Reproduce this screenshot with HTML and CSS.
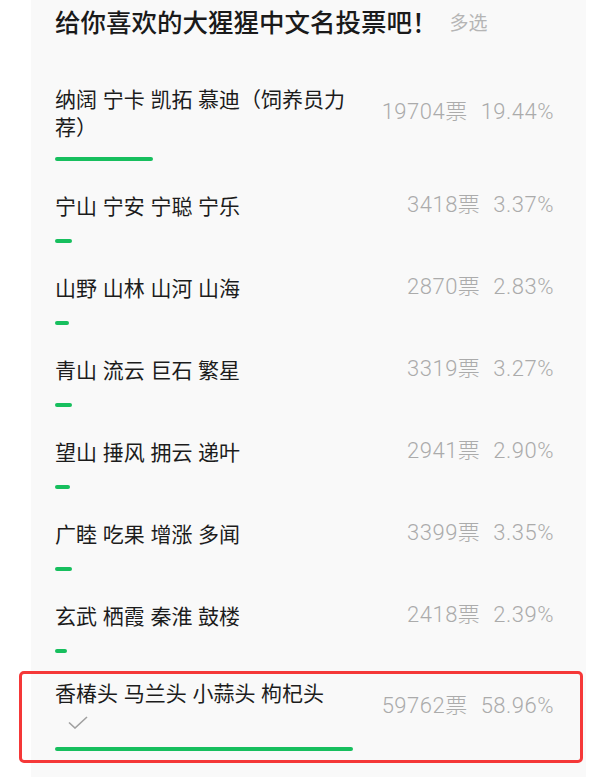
FILE: index.html
```html
<!DOCTYPE html>
<html lang="zh-CN">

<head>
    <meta charset="UTF-8">
    <meta name="viewport" content="width=device-width, initial-scale=1.0">
    <title>投票</title>
    <link rel="stylesheet" href="styles.css">
</head>

<body>
    <div class="card">
        <div class="head">
            <span class="title">给你喜欢的大猩猩中文名投票吧！</span>
            <span class="type">多选</span>
        </div>

        <div class="option tall">
            <div class="row">
                <div class="name wrap">纳阔 宁卡 凯拓 慕迪（饲养员力荐）</div>
                <div class="stats"><span class="count">19704票</span><span class="pct">19.44%</span></div>
            </div>
            <div class="track"><div class="bar" style="width: 19.44%"></div></div>
        </div>

        <div class="option">
            <div class="row">
                <div class="name">宁山 宁安 宁聪 宁乐</div>
                <div class="stats"><span class="count">3418票</span><span class="pct">3.37%</span></div>
            </div>
            <div class="track"><div class="bar" style="width: 3.37%"></div></div>
        </div>

        <div class="option">
            <div class="row">
                <div class="name">山野 山林 山河 山海</div>
                <div class="stats"><span class="count">2870票</span><span class="pct">2.83%</span></div>
            </div>
            <div class="track"><div class="bar" style="width: 2.83%"></div></div>
        </div>

        <div class="option">
            <div class="row">
                <div class="name">青山 流云 巨石 繁星</div>
                <div class="stats"><span class="count">3319票</span><span class="pct">3.27%</span></div>
            </div>
            <div class="track"><div class="bar" style="width: 3.27%"></div></div>
        </div>

        <div class="option">
            <div class="row">
                <div class="name">望山 捶风 拥云 递叶</div>
                <div class="stats"><span class="count">2941票</span><span class="pct">2.90%</span></div>
            </div>
            <div class="track"><div class="bar" style="width: 2.90%"></div></div>
        </div>

        <div class="option">
            <div class="row">
                <div class="name">广睦 吃果 增涨 多闻</div>
                <div class="stats"><span class="count">3399票</span><span class="pct">3.35%</span></div>
            </div>
            <div class="track"><div class="bar" style="width: 3.35%"></div></div>
        </div>

        <div class="option">
            <div class="row">
                <div class="name">玄武 栖霞 秦淮 鼓楼</div>
                <div class="stats"><span class="count">2418票</span><span class="pct">2.39%</span></div>
            </div>
            <div class="track"><div class="bar" style="width: 2.39%"></div></div>
        </div>

        <!-- 已选中的那一项，外面框了红框 -->
        <div class="option picked">
            <div class="row">
                <div>
                    <div class="name">香椿头 马兰头 小蒜头 枸杞头</div>
                    <div class="check">
                        <svg width="20" height="13" viewBox="0 0 20 13">
                            <polyline points="1,6.5 7,12 19,1" fill="none" stroke="#a0a0a0" stroke-width="1.6" />
                        </svg>
                    </div>
                </div>
                <div class="stats"><span class="count">59762票</span><span class="pct">58.96%</span></div>
            </div>
            <div class="track"><div class="bar" style="width: 58.96%"></div></div>
        </div>
    </div>
</body>

</html>
```

FILE: styles.css
```css
* {
    box-sizing: border-box;
}

body {
    margin: 0;
    background-color: #fff;
    font-family: "Noto Sans CJK SC", sans-serif;
}

.card {
    width: 555px;
    min-height: 777px;
    margin-left: 31px;
    background-color: #f9f9f9;
}

.head {
    padding: 4px 32px 0 24px;
    display: flex;
    align-items: center;
    margin-bottom: 28px;
}

.title {
    font-size: 25.5px;
    line-height: 34px;
    font-weight: 500;
    color: #1a1a1a;
}

.type {
    margin-left: 12px;
    font-size: 19px;
    color: #b5b5b5;
}

.option {
    padding: 15px 32px 15px 24px;
}

.row {
    display: flex;
    justify-content: space-between;
    align-items: center;
}

.name {
    font-size: 21px;
    line-height: 28px;
    word-spacing: 1px;
    color: #1c1c1c;
}

.wrap {
    width: 320px;
}

.stats {
    font-family: Roboto, "Noto Sans CJK SC", sans-serif;
    font-size: 22px;
    line-height: 28px;
    font-weight: 300;
    letter-spacing: 0.5px;
    color: #ababab;
    white-space: nowrap;
}

.pct {
    margin-left: 13px;
}

.track {
    width: 505px;
    margin-top: 20px;
}

.bar {
    height: 4px;
    border-radius: 2px;
    background-color: #17bf5e;
}

/* 两行的那一项，文字往下挪一点 */
.tall {
    padding-top: 18px;
}

.tall .track {
    margin-top: 17px;
}

.picked {
    margin: 3px 3px 0 -12px;
    padding: 4px 26px 9px 33px;
    border: 3px solid #f53838;
    border-radius: 5px;
}

.check {
    height: 28px;
    padding: 10px 0 0 13px;
}

.check svg {
    display: block;
}

.picked .track {
    margin-top: 13px;
}
```
